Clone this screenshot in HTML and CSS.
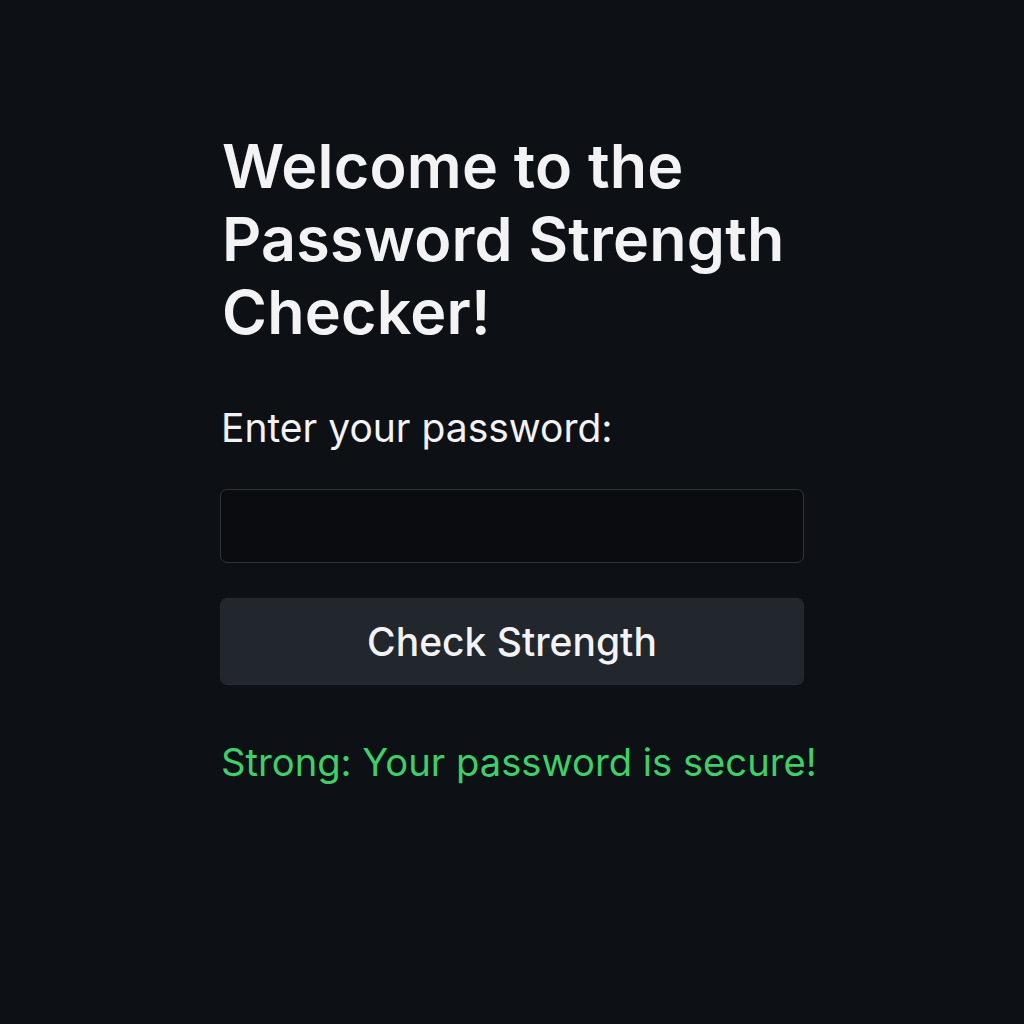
FILE: index.html
```html
<!DOCTYPE html>
<html lang="en">
<head>
<meta charset="utf-8">
<title>Password Strength Checker</title>
<link rel="stylesheet" href="styles.css">
</head>
<body>
<main class="card">
  <h1 class="title">Welcome to the Password Strength Checker!</h1>
  <label class="label" for="pw">Enter your password:</label>
  <input class="input" id="pw" type="password">
  <button class="btn" type="button">Check Strength</button>
  <p class="result">Strong: Your password is secure!</p>
</main>
</body>
</html>
```

FILE: styles.css
```css
html, body {
  margin: 0;
  padding: 0;
  background: #0d1015;
  height: 100%;
}
body {
  font-family: Inter, "Noto Sans", sans-serif;
  color: #f3f3f5;
}
.card {
  width: 584px;
  margin: 0 0 0 220px;
  padding-top: 130px;
  display: flex;
  flex-direction: column;
}
.title {
  margin: 0;
  padding-left: 2px;
  font-size: 61px;
  font-weight: 600;
  line-height: 73px;
  letter-spacing: 0.2px;
  width: 620px;
}
.label {
  margin-top: 56px;
  padding-left: 1px;
  font-size: 39px;
  line-height: 46px;
  font-weight: 400;
}
.input {
  margin-top: 38px;
  height: 74px;
  box-sizing: border-box;
  background: #0a0c10;
  border: 1px solid #30353c;
  border-radius: 7px;
  color: #fff;
  font-size: 30px;
  padding: 0 20px;
}
.btn {
  margin-top: 35px;
  height: 87px;
  background: #22262d;
  border: 1px solid #262a31;
  border-radius: 7px;
  color: #f3f3f5;
  font-family: Inter, "Noto Sans", sans-serif;
  font-size: 39px;
  font-weight: 500;
}
.result {
  margin: 54px 0 0;
  padding-left: 1px;
  font-size: 38.2px;
  line-height: 46px;
  color: #3ecf68;
  white-space: nowrap;
}
```
